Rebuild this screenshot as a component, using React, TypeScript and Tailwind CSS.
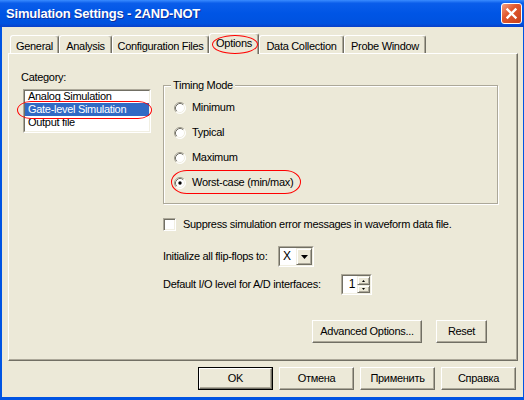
const tabs = [
  { label: "General", className: "w-[49px]" },
  { label: "Analysis", className: "w-[53px]" },
  { label: "Configuration Files", className: "w-[97px]" },
  { label: "Options", className: "w-[50px]", active: true },
  { label: "Data Collection", className: "w-[85px]" },
  { label: "Probe Window", className: "w-[82px]" },
];

const timingModes = ["Minimum", "Typical", "Maximum", "Worst-case (min/max)"];

function Radio({ checked }: { checked?: boolean }) {
  return (
    <svg width="12" height="12" viewBox="0 0 12 12" className="shrink-0" aria-hidden>
      <circle cx="6" cy="6" r="5.5" fill="#fff" />
      <path d="M2.11 9.89A5.5 5.5 0 0 1 9.89 2.11" fill="none" stroke="#9D9A8C" />
      <path d="M9.89 2.11A5.5 5.5 0 0 1 2.11 9.89" fill="none" stroke="#fff" />
      <path d="M2.82 9.18A4.5 4.5 0 0 1 9.18 2.82" fill="none" stroke="#716F64" />
      <path d="M9.18 2.82A4.5 4.5 0 0 1 2.82 9.18" fill="none" stroke="#F1EFE2" />
      {checked && <circle cx="6" cy="6" r="1.7" fill="#000" />}
    </svg>
  );
}

function Button({
  label,
  className = "",
  isDefault = false,
}: {
  label: string;
  className?: string;
  isDefault?: boolean;
}) {
  return (
    <div className={`h-[23px] ${isDefault ? "border border-black" : ""} ${className}`}>
      <div className="flex h-full w-full items-center justify-center border border-t-white border-l-white border-r-[#716F64] border-b-[#716F64] shadow-[inset_-1px_-1px_0_#ACA899]">
        {label}
      </div>
    </div>
  );
}

function Sunken({ className = "", children }: { className?: string; children: React.ReactNode }) {
  return (
    <div className={`border border-t-[#ACA899] border-l-[#ACA899] border-r-white border-b-white ${className}`}>
      <div className="flex h-full w-full overflow-hidden border border-t-[#716F64] border-l-[#716F64] border-r-[#F1EFE2] border-b-[#F1EFE2] bg-white">
        {children}
      </div>
    </div>
  );
}

function SmallButton({ className = "", children }: { className?: string; children: React.ReactNode }) {
  return (
    <div className={`flex items-center justify-center bg-[#ECE9D8] border border-t-[#F1EFE2] border-l-[#F1EFE2] border-r-[#716F64] border-b-[#716F64] shadow-[inset_1px_1px_0_#fff,inset_-1px_-1px_0_#ACA899] ${className}`}>
      {children}
    </div>
  );
}

export default function App() {
  return (
    <div className="flex h-[400px] w-[524px] flex-col bg-[#0054E3] font-['Liberation_Sans',Arial,sans-serif] text-[11px] leading-[13px] tracking-[-0.3px] text-black">
      {/* title bar */}
      <div className="flex h-[27px] items-center justify-between bg-[linear-gradient(180deg,#3A8CFF_0%,#0A5DEA_12%,#0055E5_50%,#0052DF_88%,#0A40C8_100%)] pl-[6px] pr-[2px]">
        <span className="text-[13px] font-bold tracking-[-0.2px] text-white [text-shadow:1px_1px_0_#0F2E9A]">
          Simulation Settings - 2AND-NOT
        </span>
        <div className="flex h-[21px] w-[21px] items-center justify-center rounded-[3px] border border-white bg-[linear-gradient(135deg,#F3A183_0%,#E2582E_40%,#C7401B_100%)]">
          <svg width="13" height="13" viewBox="0 0 13 13" aria-hidden>
            <path d="M2.5 2.5l8 8M10.5 2.5l-8 8" stroke="#fff" strokeWidth="2.4" strokeLinecap="square" />
          </svg>
        </div>
      </div>

      {/* dialog body */}
      <div className="mb-[3px] ml-[2px] mr-[1px] flex flex-1 flex-col bg-[#ECE9D8] pl-[6px] pr-[5px] pt-[6px]">
        {/* tabs */}
        <div className="flex h-[20px] items-end pl-[2px]">
          {tabs.map((tab) =>
            tab.active ? (
              <div
                key={tab.label}
                className={`relative z-10 -mb-[1px] flex h-[21px] items-center justify-center rounded-t-[3px] border-l border-t border-r border-l-white border-t-white border-r-[#716F64] bg-[#ECE9D8] pb-[1px] shadow-[inset_-1px_0_0_#ACA899] ${tab.className}`}
              >
                {tab.label}
                <div className="absolute left-[2px] top-[1px] h-[19px] w-[46px] rounded-[50%] border border-[#FF0000]" />
              </div>
            ) : (
              <div
                key={tab.label}
                className={`flex h-[18px] items-center justify-center rounded-t-[3px] border-l border-t border-r border-l-white border-t-white border-r-[#716F64] pt-[3px] shadow-[inset_-1px_0_0_#ACA899] ${tab.className}`}
              >
                {tab.label}
              </div>
            ),
          )}
        </div>

        {/* tab panel */}
        <div className="flex h-[308px] border border-t-white border-l-white border-r-[#716F64] border-b-[#716F64] shadow-[inset_-1px_-1px_0_#ACA899]">
          {/* category */}
          <div className="flex w-[154px] shrink-0 flex-col pl-[12px] pt-[17px]">
            <div>Category:</div>
            <div className="relative ml-[2px] mt-[5px] w-[128px]">
              <Sunken className="h-[44px]">
                <div className="-mt-[1px] flex w-full flex-col">
                  <div className="h-[13px] pl-[3px]">Analog Simulation</div>
                  <div className="h-[13px] bg-[#316AC5] pl-[3px] text-white">Gate-level Simulation</div>
                  <div className="h-[13px] pl-[3px]">Output file</div>
                </div>
              </Sunken>
              <div className="absolute left-[-6px] top-[12px] h-[18px] w-[135px] rounded-[14px_/_50%] border border-[#FF0000]" />
            </div>
          </div>

          {/* options */}
          <div className="flex flex-1 flex-col pt-[31px]">
            <div className="relative h-[119px] w-[335px] border border-[#ACA899] shadow-[inset_1px_1px_0_#fff,1px_1px_0_#fff]">
              <span className="absolute left-[7px] top-[-7px] bg-[#ECE9D8] px-[2px]">Timing Mode</span>
              <div className="flex flex-col gap-[12px] pl-[10px] pt-[15px]">
                {timingModes.map((mode, i) => (
                  <div key={mode} className="relative flex h-[13px] items-center gap-[6px]">
                    <Radio checked={i === 3} />
                    <span>{mode}</span>
                    {i === 3 && (
                      <div className="absolute left-[-3px] top-[-6px] h-[24px] w-[130px] rounded-[16px_/_50%] border border-[#FF0000]" />
                    )}
                  </div>
                ))}
              </div>
            </div>

            <div className="mt-[14px] flex h-[13px] items-center gap-[7px]">
              <div className="h-[13px] w-[13px] border border-t-[#ACA899] border-l-[#ACA899] border-r-white border-b-white bg-white shadow-[inset_1px_1px_0_#716F64,inset_-1px_-1px_0_#F1EFE2]" />
              <span>Suppress simulation error messages in waveform data file.</span>
            </div>

            <div className="mt-[15px] flex h-[21px] items-center">
              <span className="w-[115px]">Initialize all flip-flops to:</span>
              <Sunken className="h-[21px] w-[36px]">
                <div className="flex flex-1 items-center pl-[3px] text-[12px]">X</div>
                <SmallButton className="h-[17px] w-[16px]">
                  <svg width="7" height="4" viewBox="0 0 7 4" aria-hidden>
                    <path d="M0 0h7L3.5 4z" fill="#000" />
                  </svg>
                </SmallButton>
              </Sunken>
            </div>

            <div className="mt-[7px] flex h-[21px] items-center">
              <span className="w-[178px]">Default I/O level for A/D interfaces:</span>
              <Sunken className="h-[21px] w-[31px]">
                <div className="flex flex-1 items-center justify-end pr-[2px] text-[12px]">1</div>
                <div className="flex w-[13px] flex-col">
                  <SmallButton className="h-[9px] w-[13px]">
                    <svg width="3" height="2" viewBox="0 0 3 2" aria-hidden>
                      <path d="M1.5 0L3 2H0z" fill="#000" />
                    </svg>
                  </SmallButton>
                  <SmallButton className="h-[8px] w-[13px]">
                    <svg width="3" height="2" viewBox="0 0 3 2" aria-hidden>
                      <path d="M0 0h3L1.5 2z" fill="#000" />
                    </svg>
                  </SmallButton>
                </div>
              </Sunken>
            </div>

            <div className="mb-[17px] mt-auto flex justify-end gap-[14px] pr-[30px]">
              <Button label="Advanced Options..." className="w-[110px]" />
              <Button label="Reset" className="w-[51px]" />
            </div>
          </div>
        </div>

        {/* dialog buttons */}
        <div className="mt-[6px] flex justify-end gap-[6px] pr-[2px]">
          <Button label="OK" className="w-[75px]" isDefault />
          <Button label="Отмена" className="w-[75px]" />
          <Button label="Применить" className="w-[75px]" />
          <Button label="Справка" className="w-[75px]" />
        </div>
      </div>
    </div>
  );
}
